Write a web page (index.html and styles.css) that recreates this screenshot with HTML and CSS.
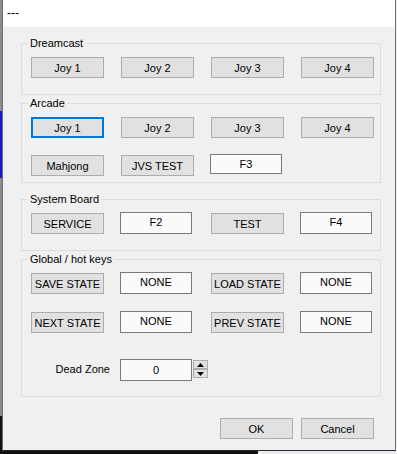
FILE: index.html
```html
<!DOCTYPE html>
<html>
<head>
<meta charset="utf-8">
<link rel="stylesheet" href="styles.css">
</head>
<body>
<div class="window">
  <div class="titlebar">---</div>
  <div class="content">
    <fieldset class="group group--dreamcast">
      <legend>Dreamcast</legend>
      <div class="grid">
        <button class="btn">Joy 1</button>
        <button class="btn">Joy 2</button>
        <button class="btn">Joy 3</button>
        <button class="btn">Joy 4</button>
      </div>
    </fieldset>
    <fieldset class="group group--arcade">
      <legend>Arcade</legend>
      <div class="grid grid--arcade">
        <button class="btn btn--focus">Joy 1</button>
        <button class="btn">Joy 2</button>
        <button class="btn">Joy 3</button>
        <button class="btn">Joy 4</button>
        <button class="btn">Mahjong</button>
        <button class="btn">JVS TEST</button>
        <div class="field field--short">F3</div>
      </div>
    </fieldset>
    <fieldset class="group group--system">
      <legend>System Board</legend>
      <div class="grid">
        <button class="btn">SERVICE</button>
        <div class="field">F2</div>
        <button class="btn">TEST</button>
        <div class="field">F4</div>
      </div>
    </fieldset>
    <fieldset class="group group--global">
      <legend>Global / hot keys</legend>
      <div class="grid grid--global">
        <button class="btn">SAVE STATE</button>
        <div class="field">NONE</div>
        <button class="btn">LOAD STATE</button>
        <div class="field">NONE</div>
        <button class="btn">NEXT STATE</button>
        <div class="field">NONE</div>
        <button class="btn">PREV STATE</button>
        <div class="field">NONE</div>
      </div>
      <div class="deadzone">
        <span class="deadzone__label">Dead Zone</span>
        <div class="field field--dz">0</div>
        <div class="spinner">
          <span class="spinner__btn"><svg width="7" height="4" viewBox="0 0 7 4"><polygon points="0,4 7,4 3.5,0" fill="#000"/></svg></span>
          <span class="spinner__btn"><svg width="7" height="4" viewBox="0 0 7 4"><polygon points="0,0 7,0 3.5,4" fill="#000"/></svg></span>
        </div>
      </div>
    </fieldset>
    <div class="actions">
      <button class="btn">OK</button>
      <button class="btn">Cancel</button>
    </div>
  </div>
</div>
</body>
</html>
```
FILE: styles.css
```css
html, body {
  margin: 0;
  padding: 0;
}
body {
  width: 397px;
  height: 454px;
  overflow: hidden;
  font-family: "Liberation Sans", Arial, sans-serif;
  font-size: 11px;
  color: #000;
  background:
    linear-gradient(#111, #111) 0 100% / 258px 3px no-repeat,
    linear-gradient(to bottom, #8c8c8c 0, #8c8c8c 111px, #1c1cc4 111px, #1c1cc4 178px, #8c8c8c 178px, #8c8c8c 416px, #111 416px) 0 0 / 2px 100% no-repeat,
    #e9ebee;
}
.window {
  margin-left: 2px;
  width: 394px;
  height: 451px;
  box-sizing: border-box;
  border: 1px solid #707070;
  border-top: 0;
  border-bottom-color: #2a2a2a;
  background: #f0f0f0;
  display: flex;
  flex-direction: column;
}
.titlebar {
  flex: none;
  height: 27px;
  line-height: 27px;
  background: #fff;
  padding-left: 4px;
  font-size: 12px;
}
.content {
  padding-left: 18px;
}
.group {
  margin: 9px 0 0;
  padding: 0;
  border: 1px solid #dcdcdc;
  width: 360px;
  box-sizing: border-box;
  min-width: 0;
}
.group--arcade { margin-top: 1px; }
.group--system { margin-top: 9px; }
.group--global { margin-top: 1px; padding-bottom: 15px; }
.group legend {
  margin-left: 6px;
  padding: 0 2px;
  line-height: 14px;
}
.grid {
  display: grid;
  grid-template-columns: 90px 90px 90px 73px;
  align-items: start;
  padding: 7px 0 16px 9px;
  row-gap: 17px;
}
.grid--arcade { padding-bottom: 6px; }
.grid--global { padding-bottom: 0; row-gap: 18px; }
.btn {
  width: 73px;
  height: 21px;
  box-sizing: border-box;
  border: 1px solid #adadad;
  background: #e1e1e1;
  font: inherit;
  color: #000;
  padding: 0;
  margin: 0;
  border-radius: 0;
}
.btn--focus {
  border: 2px solid #0078d7;
}
.field {
  width: 72px;
  height: 22px;
  box-sizing: border-box;
  border: 1px solid #7a7a7a;
  background: #fafafa;
  margin: -1px 0 0 -1px;
  text-align: center;
  line-height: 18px;
}
.field--short {
  height: 20px;
}
.field--dz {
  margin: 0;
  line-height: 20px;
}
.deadzone {
  display: flex;
  align-items: flex-start;
  margin-top: 26px;
  padding-left: 9px;
}
.deadzone__label {
  width: 79px;
  margin-right: 10px;
  text-align: right;
  line-height: 20px;
}
.spinner {
  display: flex;
  flex-direction: column;
  margin: 1px 0 0 1px;
}
.spinner__btn {
  width: 15px;
  height: 9px;
  box-sizing: border-box;
  border: 1px solid #adadad;
  background: #e1e1e1;
  display: flex;
  align-items: center;
  justify-content: center;
}
.actions {
  display: flex;
  justify-content: flex-end;
  gap: 8px;
  margin: 21px 21px 0 0;
}
```
